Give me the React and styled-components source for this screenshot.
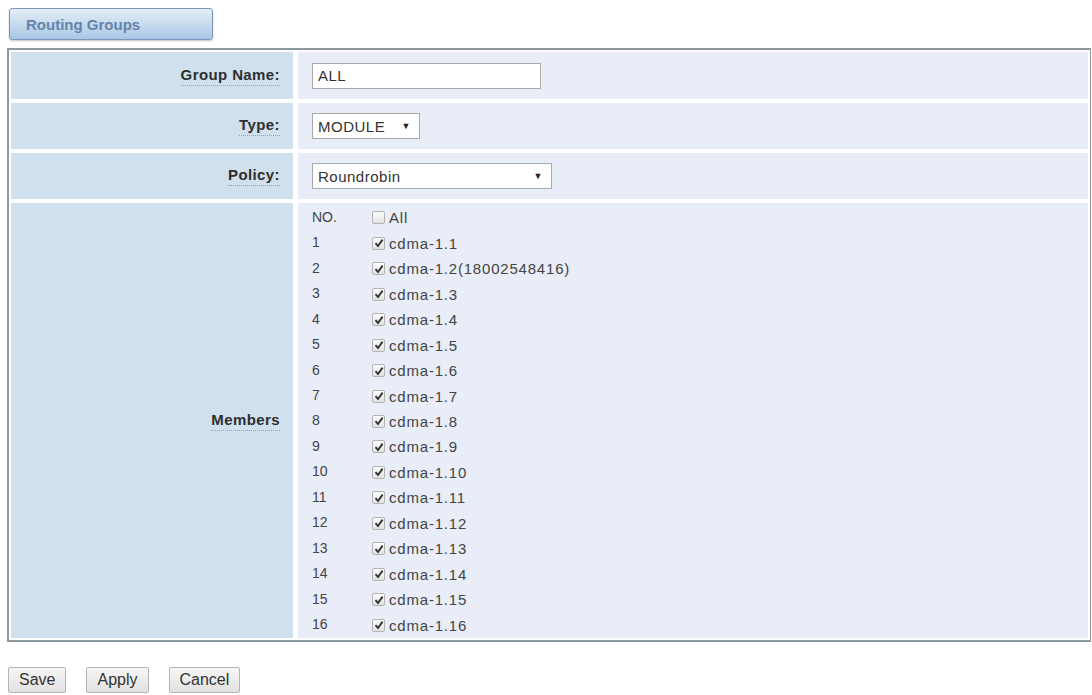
import styled, { createGlobalStyle } from 'styled-components';

const GlobalStyle = createGlobalStyle`
  body {
    margin: 0;
    background: #ffffff;
    font-family: "Liberation Sans", Arial, sans-serif;
    color: #333;
  }
`;

const members = Array.from({ length: 16 }, (_, i) => ({
  no: i + 1,
  name: i === 1 ? 'cdma-1.2(18002548416)' : `cdma-1.${i + 1}`,
}));

export default function App() {
  return (
    <Page>
      <GlobalStyle />
      <Tab>Routing Groups</Tab>
      <FormBox>
        <Label>
          <LabelText>Group Name:</LabelText>
        </Label>
        <Value>
          <TextInput defaultValue="ALL" />
        </Value>

        <Label>
          <LabelText>Type:</LabelText>
        </Label>
        <Value>
          <SelectBox $width={108}>
            <span>MODULE</span>
            <Arrow>▼</Arrow>
          </SelectBox>
        </Value>

        <Label>
          <LabelText>Policy:</LabelText>
        </Label>
        <Value>
          <SelectBox $width={240}>
            <span>Roundrobin</span>
            <Arrow>▼</Arrow>
          </SelectBox>
        </Value>

        <Label>
          <LabelText>Members</LabelText>
        </Label>
        <MembersCell>
          <MemberRow>
            <No>NO.</No>
            <Check />
            <MemberName>All</MemberName>
          </MemberRow>
          {members.map(({ no, name }) => (
            <MemberRow key={no}>
              <No>{no}</No>
              <Check>
                <svg width="10" height="10" viewBox="0 0 10 10">
                  <path d="M1.5 5.2 L4 8 L8.6 1.6" fill="none" stroke="#333" strokeWidth="1.9" />
                </svg>
              </Check>
              <MemberName>{name}</MemberName>
            </MemberRow>
          ))}
        </MembersCell>
      </FormBox>
      <Buttons>
        <Button>Save</Button>
        <Button>Apply</Button>
        <Button>Cancel</Button>
      </Buttons>
    </Page>
  );
}

const Page = styled.div`
  width: 1092px;
  height: 695px;
  overflow: hidden;
  padding-top: 8px;
  box-sizing: border-box;
`;

const Tab = styled.div`
  margin-left: 9px;
  width: 204px;
  height: 32px;
  box-sizing: border-box;
  padding-left: 16px;
  display: flex;
  align-items: center;
  border: 1px solid #7b98bb;
  border-radius: 3px;
  background: linear-gradient(#e4edf7, #c5d9ee 55%, #a9c6e5);
  box-shadow: 0 1px 2px rgba(0, 0, 0, 0.25);
  color: #6384ad;
  font-size: 15px;
  font-weight: 700;
`;

const FormBox = styled.div`
  margin: 8px 0 0 7px;
  width: 1084px;
  box-sizing: border-box;
  border: 2px solid #8c999f;
  border-right-width: 1px;
  padding: 2px;
  display: grid;
  grid-template-columns: 282px 1fr;
  grid-template-rows: 47px 46px 46px 435px;
  gap: 4px 5px;
  background: #fff;
`;

const Label = styled.div`
  background: #d0e0ed;
  display: flex;
  align-items: center;
  justify-content: flex-end;
  padding-right: 13px;
`;

const LabelText = styled.span`
  font-size: 15px;
  letter-spacing: 0.4px;
  font-weight: 700;
  color: #2e2e2e;
  border-bottom: 1px dotted #9a9fa8;
  line-height: 18px;
  padding-bottom: 1px;
`;

const Value = styled.div`
  background: #e8edf8;
  display: flex;
  align-items: center;
  padding-left: 14px;
`;

const TextInput = styled.input`
  width: 229px;
  height: 26px;
  box-sizing: border-box;
  border: 1px solid #a9a9a9;
  background: #fff;
  padding: 0 5px;
  font-family: "Liberation Sans", Arial, sans-serif;
  font-size: 15px;
  letter-spacing: 0.5px;
  color: #333;
  outline: none;
`;

const SelectBox = styled.div`
  width: ${(p) => p.$width}px;
  height: 26px;
  box-sizing: border-box;
  border: 1px solid #a9a9a9;
  background: #fff;
  display: flex;
  align-items: center;
  justify-content: space-between;
  padding: 0 8px 0 5px;
  font-size: 15px;
  letter-spacing: 0.5px;
  color: #333;
`;

const Arrow = styled.span`
  font-size: 9px;
  color: #222;
`;

const MembersCell = styled.div`
  background: #e8edf8;
  padding: 2px 0 0 14px;
  display: flex;
  flex-direction: column;
`;

const MemberRow = styled.div`
  display: flex;
  align-items: center;
  height: 25.5px;
  font-size: 14px;
  color: #444;
`;

const No = styled.span`
  width: 60px;
  margin-top: -2px;
`;

const Check = styled.span`
  width: 13px;
  height: 13px;
  box-sizing: border-box;
  border: 1px solid #b3b3b3;
  border-radius: 2px;
  background: linear-gradient(#fdfdfd, #e2e2e2);
  display: flex;
  align-items: center;
  justify-content: center;
  margin-right: 4px;
`;

const MemberName = styled.span`
  font-size: 15px;
  letter-spacing: 0.8px;
`;

const Buttons = styled.div`
  display: flex;
  gap: 20px;
  margin: 25px 0 0 8px;
`;

const Button = styled.button`
  height: 26px;
  padding: 0 10px;
  border: 1px solid #b5b5b5;
  border-radius: 2px;
  background: linear-gradient(#f6f6f6, #e1e1e1);
  font-family: "Liberation Sans", Arial, sans-serif;
  font-size: 16px;
  color: #333;
`;
